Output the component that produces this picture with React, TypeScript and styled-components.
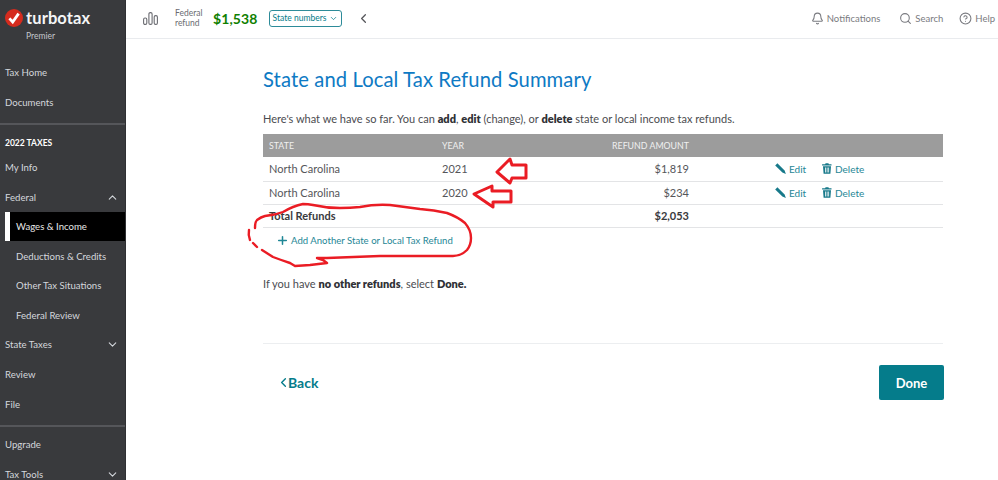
import React from "react";
import styled, { createGlobalStyle } from "styled-components";
import { Bell, Search, CircleHelp, ChevronDown, ChevronUp, ChevronLeft, Plus } from "lucide-react";

const Global = createGlobalStyle`
  html, body { margin: 0; padding: 0; background: #fff; overflow: hidden; }
  body { font-family: "Lato", "Liberation Sans", sans-serif; }
  * { box-sizing: border-box; }
`;
const Page = styled.div`
  position: relative; display: flex; width: 998px; height: 480px; overflow: hidden; background: #fff;
`;
const Sidebar = styled.nav`
  width: 126px; flex: none; height: 480px; background: #393a3d; color: #d4d7dc; overflow: hidden;
  border-right: 1px solid #2f3033;
`;
const Brand = styled.div`
  height: 58px; padding: 9px 0 0 5px; display: flex; gap: 3px; align-items: flex-start;
`;
const BrandText = styled.div`
  display: flex; flex-direction: column;
`;
const BrandName = styled.span`
  font-size: 16.5px; font-weight: 700; color: #f4f5f6; line-height: 18px; letter-spacing: 0.1px;
`;
const BrandSub = styled.span`
  font-size: 8.5px; color: #c4c7cc; line-height: 10px; margin-top: 4px;
`;
const NavItem = styled.div<{ $sub?: boolean; $active?: boolean }>`
  height: ${p => (p.$active ? 29 : 29.6)}px; display: flex; align-items: center; justify-content: space-between;
  font-size: 9.6px; padding: 0 6px 0 ${p => (p.$sub ? (p.$active ? 6 : 16) : 5)}px;
  ${p => p.$active ? "background:#000;color:#e8e8e8;border-left:5px solid #fff;margin-left:5px;" : ""}
`;
const NavGroup = styled.div`
  padding: 0;
`;
const NavDivider = styled.div<{ $after: number }>`
  height: 2px; background: #55565a; margin: 6px 0 ${p => p.$after}px;
`;
const NavHeading = styled.div`
  font-size: 8.5px; font-weight: 700; color: #fff; height: 20px; display: flex; align-items: center; padding-left: 5px;
`;
const Right = styled.div`
  flex: 1; display: flex; flex-direction: column; min-width: 0;
`;
const Header = styled.header`
  height: 39px; flex: none; display: flex; align-items: center; padding: 0 3px 2px 17px;
  border-bottom: 1px solid #e9ebee; color: #6b6c72;
`;
const ChartIcon = styled.svg`
  width: 15px; height: 13px; flex: none; margin-right: 17px;
`;
const RefundLabel = styled.div`
  font-size: 8.5px; line-height: 10.5px; color: #6b6c72; width: 38px;
`;
const RefundValue = styled.div`
  font-size: 14px; font-weight: 700; color: #108000; width: 56px; letter-spacing: 0.1px;
`;
const StateButton = styled.div`
  width: 73px; height: 17px; border: 1px solid #2d8b99; border-radius: 3px; color: #057c8b;
  font-size: 8.5px; display: flex; align-items: center; justify-content: center; gap: 3px; flex: none;
`;
const Collapse = styled.div`
  margin-left: 14px; display: flex; color: #55565a;
`;
const HeaderActions = styled.div`
  margin-left: auto; display: flex; align-items: center; font-size: 9.5px; color: #7a7b80;
`;
const HeaderAction = styled.div<{ $gap: number }>`
  display: flex; align-items: center; gap: 3px; margin-left: ${p => p.$gap}px;
`;
const Main = styled.main`
  padding: 28px 0 0 137px; width: 817px;
`;
const Title = styled.h1`
  margin: 0; font-size: 20.2px; font-weight: 400; color: #0e7ac4; line-height: 24px; letter-spacing: 0.1px;
`;
const Para = styled.p<{ $top: number }>`
  margin: ${p => p.$top}px 0 0; font-size: 11px; line-height: 14px; color: #4b4c50;
  b { font-weight: 800; color: #303136; }
`;
const Table = styled.div`
  margin-top: 8px; width: 680px;
`;
const Row = styled.div<{ $head?: boolean; $h: number; $bold?: boolean }>`
  display: grid; grid-template-columns: 173px 80px 167px 86px 47px 1fr; align-items: center;
  height: ${p => p.$h}px; padding-left: 6px; font-size: 11px; color: #55565a;
  ${p => p.$head ? "background:#9c9c9c;color:#f0f0f0;font-size:8.8px;" : "border-bottom:1.5px solid #e3e4e6;"}
  ${p => p.$bold ? "font-weight:700;color:#393a3d;" : ""}
`;
const Amount = styled.div`
  text-align: right;
`;
const ActionLink = styled.div`
  display: flex; align-items: center; gap: 3px; color: #1f8796; font-size: 10px;
`;
const AddLink = styled.div`
  display: flex; align-items: center; gap: 2px; color: #1f8796; font-size: 9.6px; height: 26.5px; padding-left: 13px;
`;
const Divider = styled.div`
  height: 1px; background: #eceef0; width: 680px; margin-top: 52px;
`;
const Footer = styled.div`
  display: flex; align-items: center; justify-content: space-between; width: 681px; margin-top: 21px;
`;
const Back = styled.div`
  display: flex; align-items: center; color: #057c8b; font-size: 14px; font-weight: 700; padding-left: 13px;
  svg { margin-right: -3px; }
`;
const Done = styled.div`
  width: 65px; height: 35px; background: #057c8b; color: #fff; border-radius: 2px; font-size: 13px; font-weight: 700;
  display: flex; align-items: center; justify-content: center;
`;
const Annotation = styled.svg`
  position: absolute; left: 0; top: 0; width: 998px; height: 480px; pointer-events: none;
`;

const Pencil = () => (
  <svg width="11" height="11" viewBox="0 0 11 11" aria-hidden="true">
    <path d="M0.2 2.4 L2.4 0.2 L9.6 7.4 L10.9 10.9 L7.4 9.6 Z" fill="#17798a" />
  </svg>
);
const Trash = () => (
  <svg width="10" height="11" viewBox="0 0 10 11" aria-hidden="true">
    <path d="M3.6 0.3h2.8l.5 1h2.6v1.2H.1V1.3h3zM1 3.2h8l-.6 7.5H1.6zM3 4.4v5h.8v-5zM4.7 4.4v5h.8v-5zM6.3 4.4v5h.8v-5z" fill="#17798a" fillRule="evenodd" />
  </svg>
);

const rows = [
  { s: "North Carolina", y: "2021", a: "$1,819", h: 24.5 },
  { s: "North Carolina", y: "2020", a: "$234", h: 23 },
];

export default function App() {
  return (
    <Page>
      <Global />
      <Sidebar>
        <Brand>
          <svg width="18" height="18" viewBox="0 0 18 18" aria-hidden="true">
            <circle cx="9" cy="9" r="9" fill="#d52b1e" />
            <path d="M4.4 9.4 L7.7 13 L13.6 4.6" fill="none" stroke="#fff" strokeWidth="2.8" />
          </svg>
          <BrandText>
            <BrandName>turbotax</BrandName>
            <BrandSub>Premier</BrandSub>
          </BrandText>
        </Brand>
        <NavGroup>
          <NavItem>Tax Home</NavItem>
          <NavItem>Documents</NavItem>
          <NavDivider $after={8} />
          <NavHeading>2022 TAXES</NavHeading>
          <NavItem>My Info</NavItem>
          <NavItem>Federal<ChevronUp size={13} /></NavItem>
          <NavItem $sub $active>Wages &amp; Income</NavItem>
          <NavItem $sub>Deductions &amp; Credits</NavItem>
          <NavItem $sub>Other Tax Situations</NavItem>
          <NavItem $sub>Federal Review</NavItem>
          <NavItem>State Taxes<ChevronDown size={13} /></NavItem>
          <NavItem>Review</NavItem>
          <NavItem>File</NavItem>
          <NavDivider $after={3} />
          <NavItem>Upgrade</NavItem>
          <NavItem>Tax Tools<ChevronDown size={13} /></NavItem>
        </NavGroup>
      </Sidebar>
      <Right>
        <Header>
          <ChartIcon viewBox="0 0 15 13" aria-hidden="true">
            <g fill="none" stroke="#6b6c72" strokeWidth="1.1">
              <rect x="0.6" y="6" width="3.2" height="6.4" rx="1.4" />
              <rect x="5.9" y="0.6" width="3.2" height="11.8" rx="1.4" />
              <rect x="11.2" y="3.6" width="3.2" height="8.8" rx="1.4" />
            </g>
          </ChartIcon>
          <RefundLabel>Federal<br />refund</RefundLabel>
          <RefundValue>$1,538</RefundValue>
          <StateButton>State numbers<ChevronDown size={9} /></StateButton>
          <Collapse><ChevronLeft size={15} /></Collapse>
          <HeaderActions>
            <HeaderAction $gap={0}><Bell size={13} />Notifications</HeaderAction>
            <HeaderAction $gap={19}><Search size={13} />Search</HeaderAction>
            <HeaderAction $gap={16}><CircleHelp size={13} />Help</HeaderAction>
          </HeaderActions>
        </Header>
        <Main>
          <Title>State and Local Tax Refund Summary</Title>
          <Para $top={21}>Here's what we have so far. You can <b>add</b>, <b>edit</b> (change), or <b>delete</b> state or local income tax refunds.</Para>
          <Table>
            <Row $head $h={23}>
              <div>STATE</div><div>YEAR</div><Amount>REFUND AMOUNT</Amount><div /><div /><div />
            </Row>
            {rows.map(r => (
              <Row key={r.y} $h={r.h}>
                <div>{r.s}</div><div>{r.y}</div><Amount>{r.a}</Amount><div />
                <ActionLink><Pencil />Edit</ActionLink>
                <ActionLink><Trash />Delete</ActionLink>
              </Row>
            ))}
            <Row $h={23} $bold>
              <div>Total Refunds</div><div /><Amount>$2,053</Amount><div /><div /><div />
            </Row>
            <AddLink><Plus size={13} strokeWidth={2.8} />Add Another State or Local Tax Refund</AddLink>
          </Table>
          <Para $top={23}>If you have <b>no other refunds</b>, select <b>Done.</b></Para>
          <Divider />
          <Footer>
            <Back><ChevronLeft size={15} strokeWidth={2.2} />Back</Back>
            <Done>Done</Done>
          </Footer>
        </Main>
      </Right>
      <Annotation viewBox="0 0 998 480" aria-hidden="true">
        <g fill="none" stroke="#ea1c24" strokeWidth="2.4" strokeLinejoin="round" strokeLinecap="round">
          <path d="M497 172 L510 159 L512 165 L526 165 L526 178 L512 178 L510 183 Z" strokeWidth="3" />
          <path d="M474 194 L492 186 L492 191 L511 191 L511 202 L493 202 L493 207 Z" strokeWidth="3" />
          <path d="M255 228 Q255 222 257 220 Q261 217 265 216 Q275 215 283 212 Q293 206 303 204 Q308 204 313 205 Q326 208 340 208 Q350 208 360 207 Q375 204 390 205 Q405 207 420 209 Q434 210 447 213 Q458 217 465 223 Q471 230 471 238 Q471 245 467 250 Q461 256 453 256 L380 256 L327 258 L317 258 L323 260 L327 263 L310 265 L295 266 L290 263 Q281 260 273 257 L262 250" />
          <path d="M249 230 Q248 235 250 240" />
          <path d="M253 243 L257 247" />
        </g>
      </Annotation>
    </Page>
  );
}
